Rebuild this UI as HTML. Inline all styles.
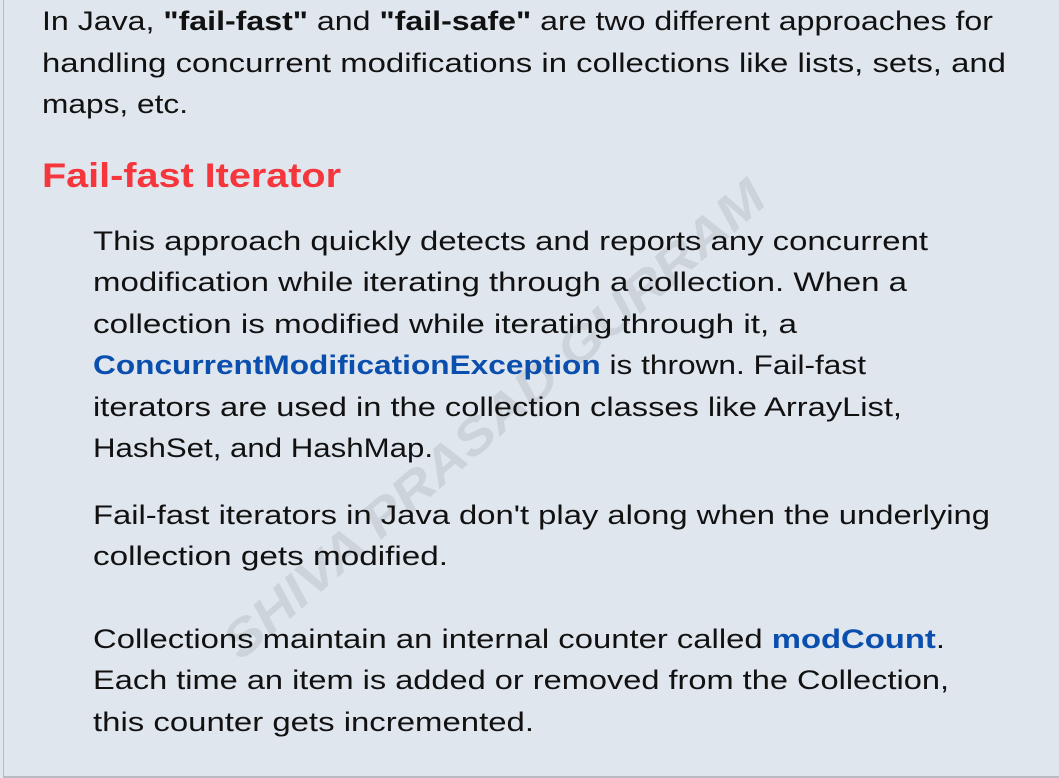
<!DOCTYPE html>
<html><head><meta charset="utf-8"><style>
html,body{margin:0;padding:0;background:#e0e6ee;}
svg{display:block}
text{font-family:"Liberation Sans",sans-serif;font-size:27px;fill:#111;}
.b{font-weight:bold}
.bl{font-weight:bold;fill:#0b4fae}
</style></head><body>
<svg width="1059" height="778" viewBox="0 0 1059 778">
<rect x="0" y="0" width="1059" height="778" fill="#e0e6ee"/>
<rect x="3" y="0" width="1" height="778" fill="#b8bcc2"/>
<rect x="3" y="776" width="1056" height="2" fill="#b8bcc2"/>
<text x="505" y="432" transform="rotate(-41 505 432)" text-anchor="middle" textLength="700" lengthAdjust="spacingAndGlyphs" style="font-size:50px;font-weight:bold;font-style:italic;fill:#cdd3db">SHIVA PRASAD GURRAM</text>
<text x="42" y="30" textLength="951" lengthAdjust="spacingAndGlyphs">In Java, <tspan class="b">"fail-fast"</tspan> and <tspan class="b">"fail-safe"</tspan> are two different approaches for</text>
<text x="42" y="72" textLength="964" lengthAdjust="spacingAndGlyphs">handling concurrent modifications in collections like lists, sets, and</text>
<text x="42" y="113" textLength="146" lengthAdjust="spacingAndGlyphs">maps, etc.</text>
<text x="42" y="187" textLength="299" lengthAdjust="spacingAndGlyphs" style="font-size:34px;font-weight:bold;fill:#f5363c">Fail-fast Iterator</text>
<text x="93" y="250" textLength="835" lengthAdjust="spacingAndGlyphs">This approach quickly detects and reports any concurrent</text>
<text x="93" y="291" textLength="814" lengthAdjust="spacingAndGlyphs">modification while iterating through a collection. When a</text>
<text x="93" y="333" textLength="704" lengthAdjust="spacingAndGlyphs">collection is modified while iterating through it, a</text>
<text x="93" y="374" textLength="773" lengthAdjust="spacingAndGlyphs"><tspan class="bl">ConcurrentModificationException</tspan> is thrown. Fail-fast</text>
<text x="93" y="416" textLength="809" lengthAdjust="spacingAndGlyphs">iterators are used in the collection classes like ArrayList,</text>
<text x="93" y="457" textLength="340" lengthAdjust="spacingAndGlyphs">HashSet, and HashMap.</text>
<text x="93" y="524" textLength="897" lengthAdjust="spacingAndGlyphs">Fail-fast iterators in Java don't play along when the underlying</text>
<text x="93" y="565" textLength="355" lengthAdjust="spacingAndGlyphs">collection gets modified.</text>
<text x="93" y="648" textLength="852" lengthAdjust="spacingAndGlyphs">Collections maintain an internal counter called <tspan class="bl">modCount</tspan>.</text>
<text x="93" y="689" textLength="856" lengthAdjust="spacingAndGlyphs">Each time an item is added or removed from the Collection,</text>
<text x="93" y="731" textLength="441" lengthAdjust="spacingAndGlyphs">this counter gets incremented.</text>
</svg>
</body></html>
